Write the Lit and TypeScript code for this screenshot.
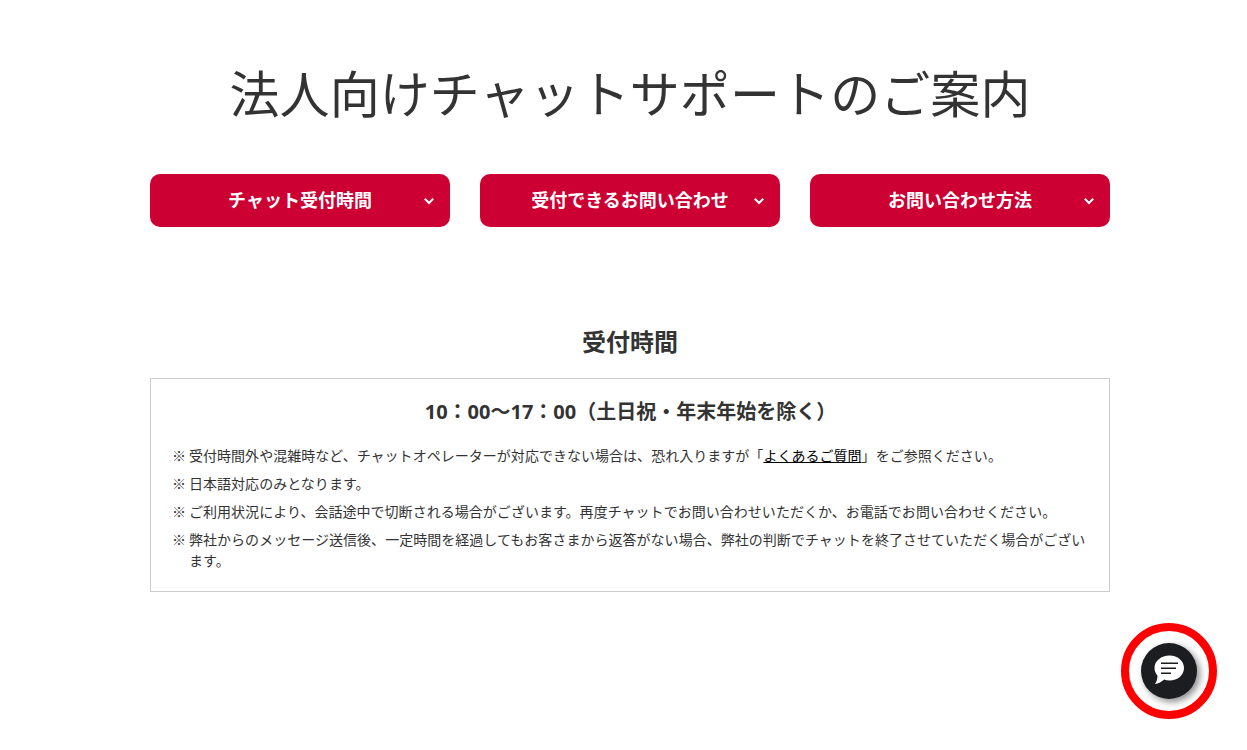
import { LitElement, html, css } from "lit";
import { customElement } from "lit/decorators.js";

const chev = html`<svg class="chev" viewBox="0 0 12 12" width="12" height="12"><path d="M1.800 3.800 L6 8 L10.200 3.800" fill="none" stroke="#fff" stroke-width="2"/></svg>`;

@customElement("app-root")
export class AppRoot extends LitElement {
  static styles = css`
    :host { display: block; height: 750px; position: relative; overflow: hidden; background: #fff; color: #333;
      font-family: "Open Sans", "Noto Sans CJK JP", sans-serif; }
    .wrap { width: 960px; margin-left: 150px; padding-top: 59px; }
    h1 { margin: 0; text-align: center; font-weight: 400; font-size: 50px; line-height: 70px; color: #333; white-space: nowrap; letter-spacing: .1px; }
    .btns { display: flex; gap: 30px; margin-top: 45px; }
    .btn { position: relative; flex: 1; height: 53px; box-sizing: border-box; padding-bottom: 4px; border-radius: 10px; background: #c03; color: #fff; display: flex;
      align-items: center; justify-content: center; font-weight: 700; font-size: 18px; }
    .chev { position: absolute; right: 15px; top: 21px; }
    h2 { margin: 97px 0 0; text-align: center; font-size: 24px; line-height: 36px; font-weight: 700; color: #333; }
    .box { border: 1px solid #ccc; margin-top: 18px; padding: 17px 22px 20px 21px; }
    h3 { margin: 0 0 17px; padding-left: 2px; text-align: center; font-size: 20px; line-height: 32px; font-weight: 700; color: #333; }
    ul { margin: 0; padding: 0; list-style: none; font-size: 14px; line-height: 21px; letter-spacing: .03px; }
    li { position: relative; padding-left: 17px; margin-bottom: 7px; }
    li:last-child { margin-bottom: 0; }
    li::before { content: "※"; position: absolute; left: 0; }
    a { color: #000; text-decoration: underline; }
    .ring { position: absolute; left: 1120.5px; top: 623px; width: 96px; height: 96px; box-sizing: border-box;
      border: 8px solid #f00; border-radius: 50%; display: flex; align-items: center; justify-content: center; }
    .fab { width: 56px; height: 56px; border-radius: 50%; background: #1b1d21; box-shadow: 3px 3px 7px rgba(0,0,0,.45);
      display: flex; align-items: center; justify-content: center; }
  `;
  render() {
    return html`
      <div class="wrap">
        <h1>法人向けチャットサポートのご案内</h1>
        <div class="btns">
          <div class="btn">チャット受付時間${chev}</div>
          <div class="btn">受付できるお問い合わせ${chev}</div>
          <div class="btn">お問い合わせ方法${chev}</div>
        </div>
        <h2>受付時間</h2>
        <div class="box">
          <h3>10：00～17：00（土日祝・年末年始を除く）</h3>
          <ul>
            <li>受付時間外や混雑時など、チャットオペレーターが対応できない場合は、恐れ入りますが「<a>よくあるご質問</a>」をご参照ください。</li>
            <li>日本語対応のみとなります。</li>
            <li>ご利用状況により、会話途中で切断される場合がございます。再度チャットでお問い合わせいただくか、お電話でお問い合わせください。</li>
            <li>弊社からのメッセージ送信後、一定時間を経過してもお客さまから返答がない場合、弊社の判断でチャットを終了させていただく場合がございます。</li>
          </ul>
        </div>
      </div>
      <div class="ring">
        <div class="fab">
          <svg viewBox="0 0 32 32" width="32" height="32">
            <path d="M16.500 0.500 C24.800 0.500 31 6 31 13 C31 20 24.800 25.500 16.500 25.500 C14.500 25.500 12.800 25.200 11.200 24.600 C8.800 26.800 5.500 28.700 2 29 C3.500 27 4.300 24.500 4.500 20.800 C2.800 18.700 1.500 16 1.500 13 C1.500 6 8.200 0.500 16.500 0.500 Z" fill="#fff"/>
            <path d="M8 8.300 H25 M8 13.300 H23 M8 18.300 H18" stroke="#1b1d21" stroke-width="1.500" fill="none"/>
          </svg>
        </div>
      </div>
    `;
  }
}
